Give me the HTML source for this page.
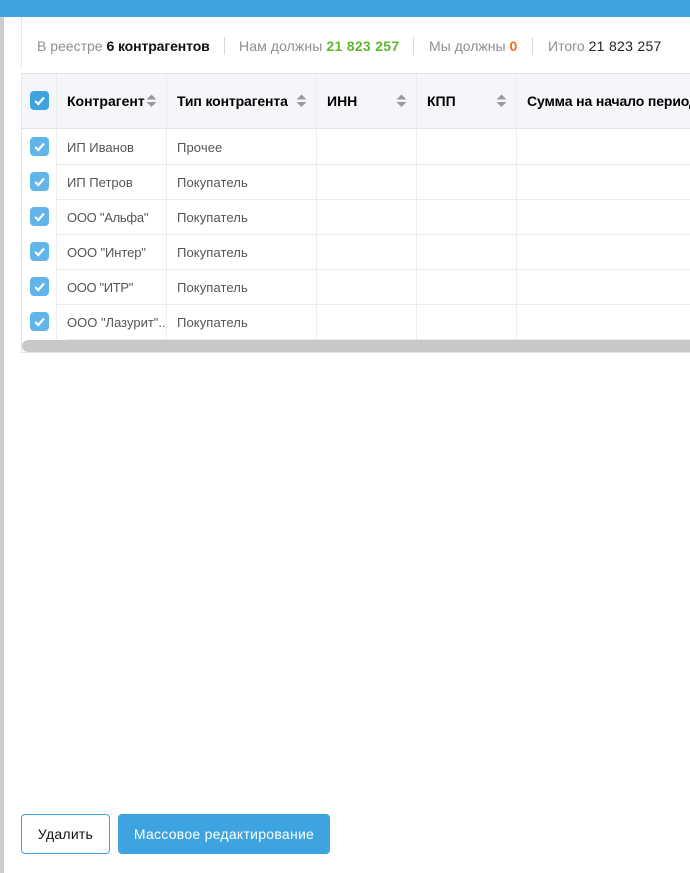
<!DOCTYPE html>
<html lang="ru">
<head>
<meta charset="utf-8">
<title>Контрагенты</title>
<style>
html,body{margin:0;padding:0;background:#fff;}
body{position:relative;width:690px;height:873px;overflow:hidden;font-family:"Liberation Sans",sans-serif;}
.a{position:absolute;}
.t{position:absolute;white-space:nowrap;line-height:16px;}
.s{font-size:14px;color:#8f8f8f;top:38px;}
.n{font-size:14px;letter-spacing:.3px;}
.b{color:#111;font-weight:bold;letter-spacing:-.1px;}
.h{font-size:14px;font-weight:bold;color:#000;top:93px;letter-spacing:-.13px;}
.c{font-size:13px;color:#555;letter-spacing:.1px;}
.q{letter-spacing:-.27px;}
.l{position:absolute;background:#ececec;}
.cb{position:absolute;left:30px;width:19px;height:19px;border-radius:4px;background:#62b5ea;}
.cb svg{position:absolute;left:0;top:0;}
.sort{position:absolute;top:94px;}
</style>
</head>
<body>
<div class="a" style="left:0;top:0;width:690px;height:17px;background:#3ea4df;"></div>
<div class="a" style="left:0;top:17px;width:4px;height:856px;background:#cdcdcd;"></div>
<div class="a" style="left:21px;top:17px;width:1px;height:50px;background:#e6e6e6;"></div>

<div class="t s" style="left:37px;">В реестре <span class="b">6 контрагентов</span></div>
<div class="a" style="left:224px;top:37px;width:1px;height:18px;background:#d8d8d8;"></div>
<div class="t s" style="left:239px;letter-spacing:.1px;">Нам должны <span class="n" style="color:#5cb82c;font-weight:bold;">21 823 257</span></div>
<div class="a" style="left:413px;top:37px;width:1px;height:18px;background:#d8d8d8;"></div>
<div class="t s" style="left:429px;">Мы должны <span class="n" style="color:#f76b1c;font-weight:bold;">0</span></div>
<div class="a" style="left:532px;top:37px;width:1px;height:18px;background:#d8d8d8;"></div>
<div class="t s" style="left:548px;">Итого <span class="n" style="color:#222;">21 823 257</span></div>

<!-- table header -->
<div class="a" style="left:22px;top:74px;width:668px;height:54px;background:#f4f6fa;"></div>
<div class="l" style="left:21px;top:73px;width:669px;height:1px;background:#e4e4e4;"></div>
<div class="l" style="left:21px;top:128px;width:669px;height:1px;background:#e4e4e4;"></div>
<div class="l" style="left:21px;top:73px;width:1px;height:280px;background:#e4e4e4;"></div>
<div class="l" style="left:56px;top:74px;width:1px;height:266px;"></div>
<div class="l" style="left:166px;top:74px;width:1px;height:266px;"></div>
<div class="l" style="left:316px;top:74px;width:1px;height:266px;"></div>
<div class="l" style="left:416px;top:74px;width:1px;height:266px;"></div>
<div class="l" style="left:516px;top:74px;width:1px;height:266px;"></div>

<!-- row lines -->
<div class="l" style="left:56px;top:164px;width:634px;height:1px;"></div>
<div class="l" style="left:56px;top:199px;width:634px;height:1px;"></div>
<div class="l" style="left:56px;top:234px;width:634px;height:1px;"></div>
<div class="l" style="left:56px;top:269px;width:634px;height:1px;"></div>
<div class="l" style="left:56px;top:304px;width:634px;height:1px;"></div>
<div class="l" style="left:66px;top:339px;width:624px;height:1px;"></div>

<!-- header text -->
<div class="t h" style="left:67px;letter-spacing:0;">Контрагент</div>
<div class="t h" style="left:177px;">Тип контрагента</div>
<div class="t h" style="left:327px;letter-spacing:0;">ИНН</div>
<div class="t h" style="left:427px;letter-spacing:0;">КПП</div>
<div class="t h" style="left:527px;">Сумма на начало периода</div>

<svg class="sort" style="left:146px;" width="11" height="14" viewBox="0 0 11 14"><path d="M5.5 0.5L10.5 5.5H0.5ZM0.5 8H10.5L5.5 13Z" fill="#9a9a9a"/></svg>
<svg class="sort" style="left:296px;" width="11" height="14" viewBox="0 0 11 14"><path d="M5.5 0.5L10.5 5.5H0.5ZM0.5 8H10.5L5.5 13Z" fill="#9a9a9a"/></svg>
<svg class="sort" style="left:396px;" width="11" height="14" viewBox="0 0 11 14"><path d="M5.5 0.5L10.5 5.5H0.5ZM0.5 8H10.5L5.5 13Z" fill="#9a9a9a"/></svg>
<svg class="sort" style="left:496px;" width="11" height="14" viewBox="0 0 11 14"><path d="M5.5 0.5L10.5 5.5H0.5ZM0.5 8H10.5L5.5 13Z" fill="#9a9a9a"/></svg>

<!-- checkboxes -->
<div class="cb" style="left:29.500px;top:91px;background:#3ea4df;"><svg width="19" height="19" viewBox="0 0 19 19"><path d="M5.200 10L8.300 13L14 6.500" fill="none" stroke="#fff" stroke-width="2.200"/></svg></div>
<div class="cb" style="top:137px;"><svg width="19" height="19" viewBox="0 0 19 19"><path d="M5.200 10L8.300 13L14 6.500" fill="none" stroke="#fff" stroke-width="2.200"/></svg></div>
<div class="cb" style="top:172px;"><svg width="19" height="19" viewBox="0 0 19 19"><path d="M5.200 10L8.300 13L14 6.500" fill="none" stroke="#fff" stroke-width="2.200"/></svg></div>
<div class="cb" style="top:207px;"><svg width="19" height="19" viewBox="0 0 19 19"><path d="M5.200 10L8.300 13L14 6.500" fill="none" stroke="#fff" stroke-width="2.200"/></svg></div>
<div class="cb" style="top:242px;"><svg width="19" height="19" viewBox="0 0 19 19"><path d="M5.200 10L8.300 13L14 6.500" fill="none" stroke="#fff" stroke-width="2.200"/></svg></div>
<div class="cb" style="top:277px;"><svg width="19" height="19" viewBox="0 0 19 19"><path d="M5.200 10L8.300 13L14 6.500" fill="none" stroke="#fff" stroke-width="2.200"/></svg></div>
<div class="cb" style="top:312px;"><svg width="19" height="19" viewBox="0 0 19 19"><path d="M5.200 10L8.300 13L14 6.500" fill="none" stroke="#fff" stroke-width="2.200"/></svg></div>

<!-- rows -->
<div class="t c" style="left:67px;top:140px;letter-spacing:0;">ИП Иванов</div>
<div class="t c" style="left:177px;top:140px;">Прочее</div>
<div class="t c" style="left:67px;top:175px;letter-spacing:0;">ИП Петров</div>
<div class="t c" style="left:177px;top:175px;">Покупатель</div>
<div class="t c q" style="left:67px;top:210px;">ООО "Альфа"</div>
<div class="t c" style="left:177px;top:210px;">Покупатель</div>
<div class="t c q" style="left:67px;top:245px;letter-spacing:-.1px;">ООО "Интер"</div>
<div class="t c" style="left:177px;top:245px;">Покупатель</div>
<div class="t c q" style="left:67px;top:280px;letter-spacing:-.35px;">ООО "ИТР"</div>
<div class="t c" style="left:177px;top:280px;">Покупатель</div>
<div class="t c" style="left:67px;top:315px;letter-spacing:0;">ООО "Лазурит"..</div>
<div class="t c" style="left:177px;top:315px;">Покупатель</div>

<!-- scrollbar -->
<div class="a" style="left:22px;top:340px;width:680px;height:12px;border-radius:6px;background:#c8c8c8;"></div>
<div class="l" style="left:21px;top:352px;width:669px;height:1px;background:#e4e4e4;"></div>

<!-- buttons -->
<div class="a" style="left:21px;top:814px;width:87px;height:38px;border:1px solid #3ea4df;border-radius:4px;background:#fff;color:#111;font-size:14px;line-height:38px;text-align:center;letter-spacing:.25px;">Удалить</div>
<div class="a" style="left:118px;top:814px;width:212px;height:40px;border-radius:4px;background:#3ea4df;color:#fff;font-size:14px;line-height:40px;text-align:center;letter-spacing:.27px;">Массовое редактирование</div>
</body>
</html>
